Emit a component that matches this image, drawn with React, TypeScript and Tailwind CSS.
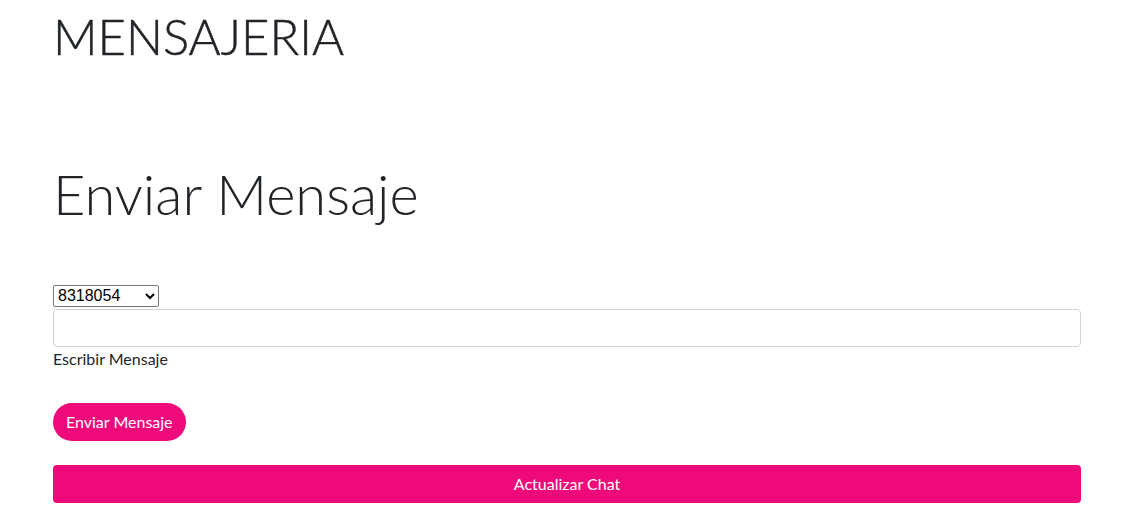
import React from "react";

export default function App() {
  return (
    <div className="min-h-[510px] w-full bg-white font-['Lato',sans-serif] text-[#212529]">
      <div className="flex w-[1081px] flex-col pl-[53px]">
        <h1 className="mt-[7px] text-[49px] font-light leading-[1.2] [-webkit-text-stroke:0.45px_#212529]">
          MENSAJERIA
        </h1>
        <h2 className="mt-[94px] text-[56px] font-light leading-[1.2]">Enviar Mensaje</h2>
        <div className="mt-[58px] flex flex-col items-start">
          <select
            defaultValue="8318054"
            className="h-[22px] w-[106px] rounded-[2px] border border-[#767676] bg-white font-['Liberation_Sans',sans-serif] text-[16px] leading-none text-black"
          >
            <option value="8318054">8318054</option>
          </select>
          <input
            type="text"
            className="mt-[2px] h-[38px] w-full rounded-[4px] border border-[#ced4da] bg-white px-3 text-[16px] outline-none"
          />
          <label className="text-[16px] leading-[24px]">Escribir Mensaje</label>
          <button className="mt-[32px] h-[38px] rounded-full bg-[#ee0a7a] px-[13px] text-[16px] leading-none text-white">
            Enviar Mensaje
          </button>
          <button className="mt-[24px] h-[38px] w-full rounded-[4px] bg-[#ee0a7a] text-[16px] leading-none text-white">
            Actualizar Chat
          </button>
        </div>
      </div>
    </div>
  );
}
